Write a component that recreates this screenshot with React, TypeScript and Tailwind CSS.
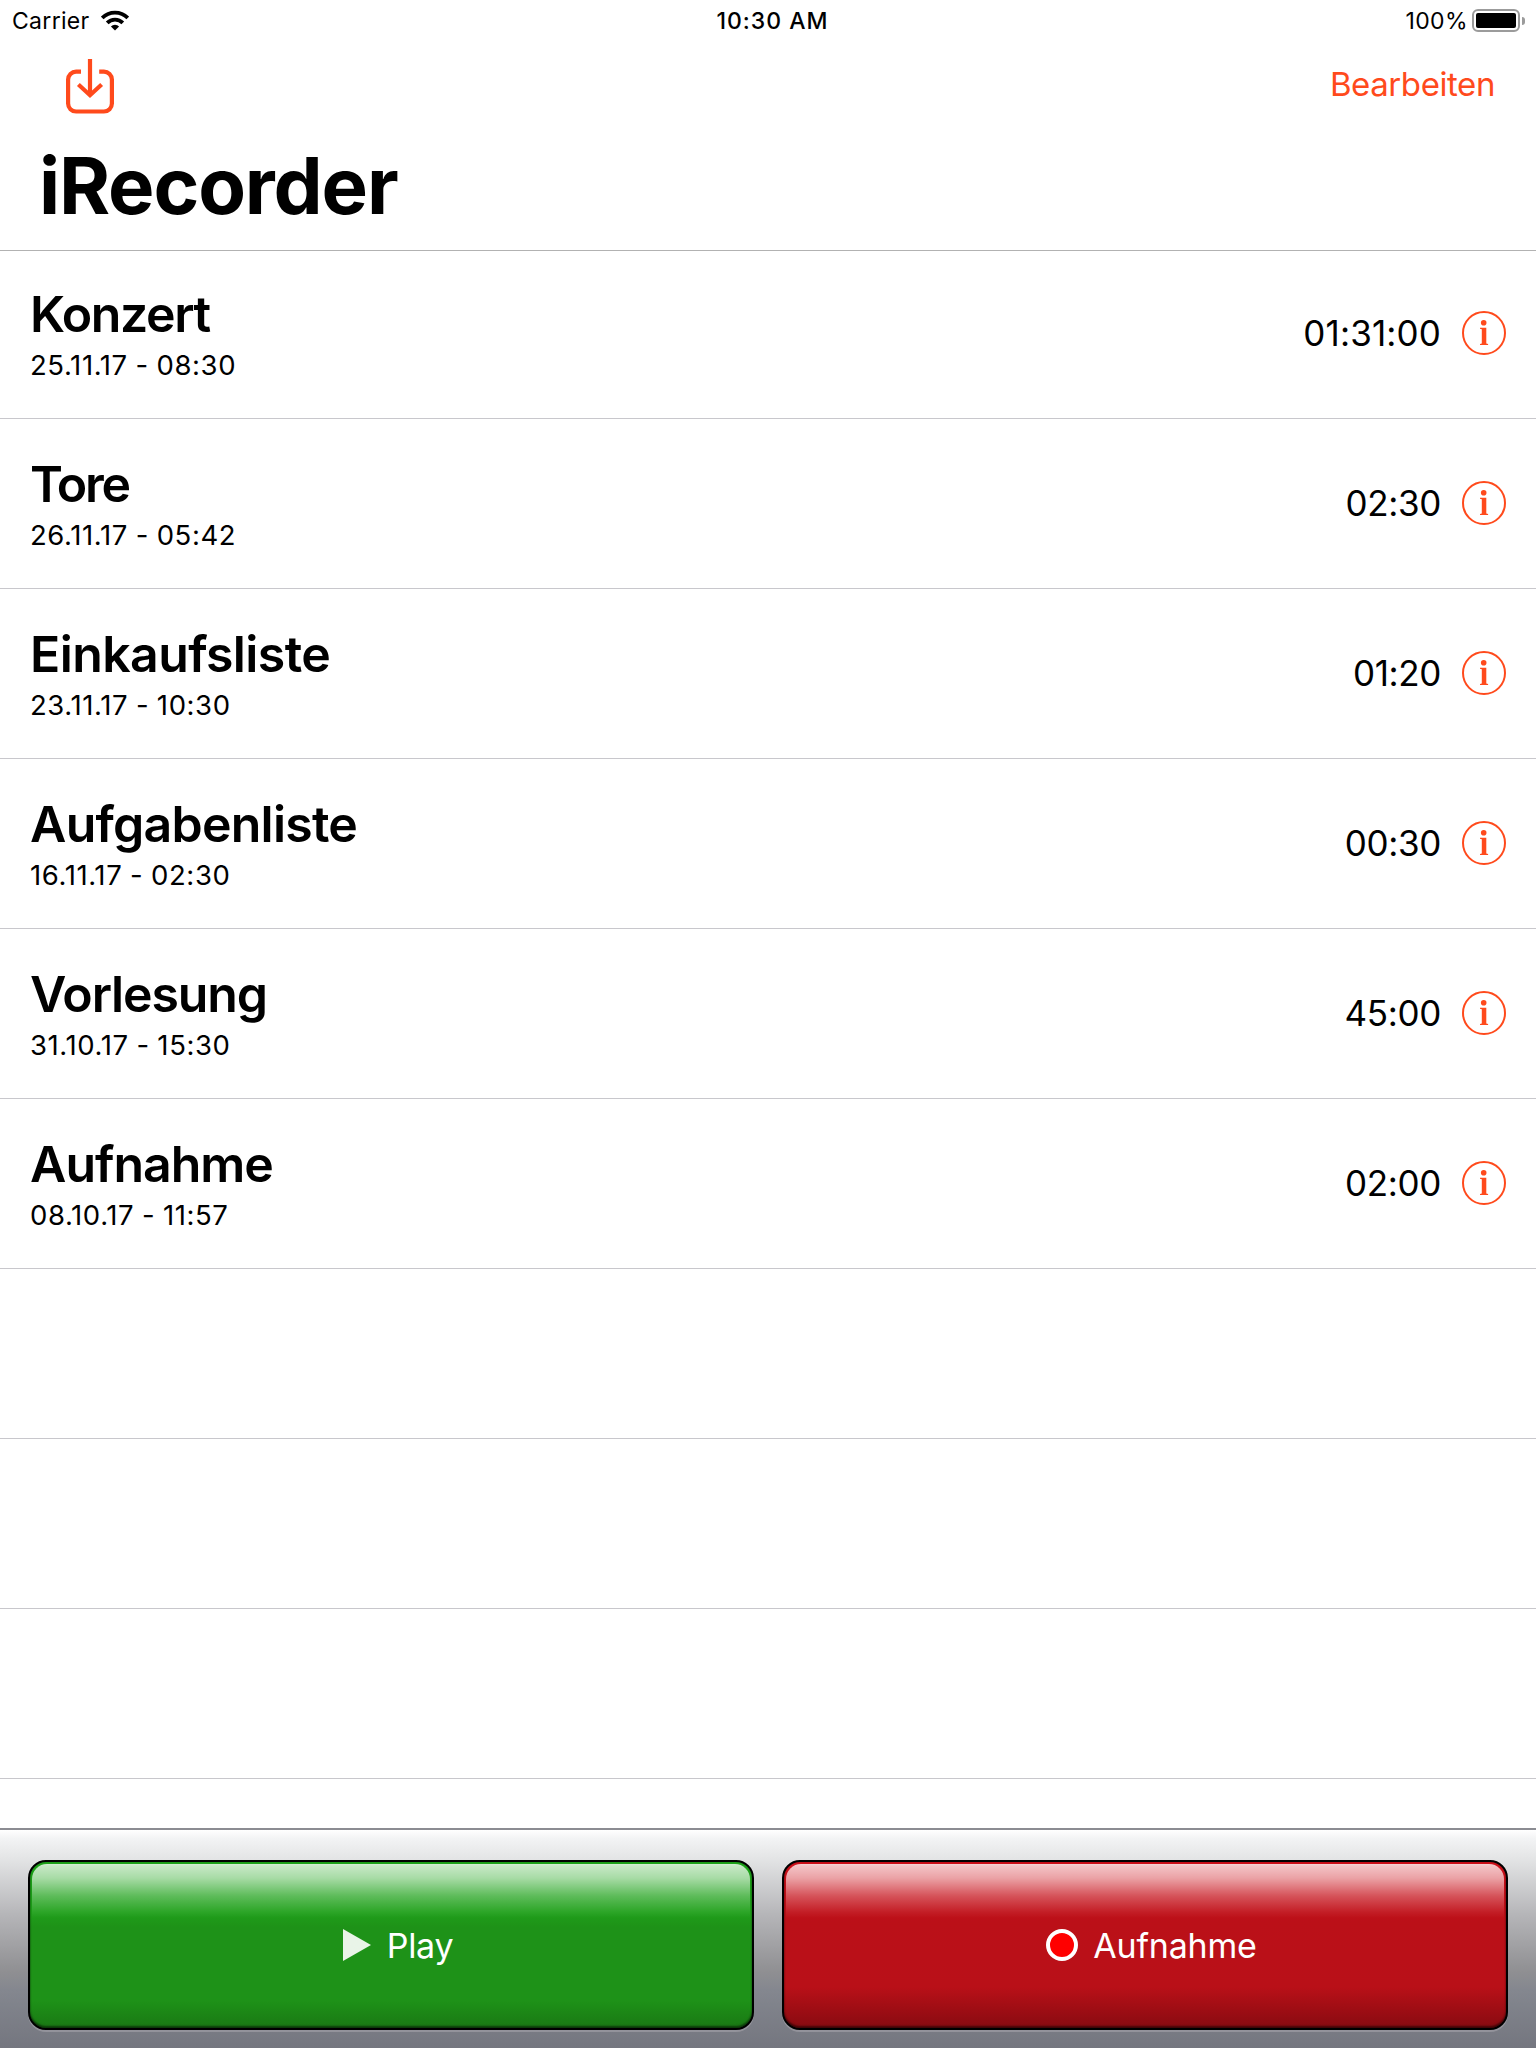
interface Recording {
  name: string
  date: string
  duration: string
  tracking: string
}

const recordings: Recording[] = [
  { name: "Konzert", date: "25.11.17 - 08:30", duration: "01:31:00", tracking: "tracking-[-1.4px]" },
  { name: "Tore", date: "26.11.17 - 05:42", duration: "02:30", tracking: "tracking-[-2.3px]" },
  { name: "Einkaufsliste", date: "23.11.17 - 10:30", duration: "01:20", tracking: "tracking-[-0.6px]" },
  { name: "Aufgabenliste", date: "16.11.17 - 02:30", duration: "00:30", tracking: "tracking-[-0.75px]" },
  { name: "Vorlesung", date: "31.10.17 - 15:30", duration: "45:00", tracking: "tracking-[-1.15px]" },
  { name: "Aufnahme", date: "08.10.17 - 11:57", duration: "02:00", tracking: "tracking-[-1px]" },
]

function WifiIcon() {
  return (
    <svg width="28" height="21" viewBox="101 9.5 28 21" fill="none" stroke="#000" strokeWidth="3.8">
      <path d="M102.2 17.4a18 18 0 0 1 25.6 0" />
      <path d="M107.2 22.3a11 11 0 0 1 15.6 0" />
      <path d="M110.9 25.9a5.8 5.8 0 0 1 8.2 0L115 30z" fill="#000" stroke="none" />
    </svg>
  )
}

function BatteryIcon() {
  return (
    <div className="flex items-center gap-0.5">
      <div className="h-[23px] w-12 rounded-[6px] border-2 border-[#9b9b9b] p-0.5">
        <div className="h-full w-full rounded-[2px] bg-black" />
      </div>
      <div className="h-2 w-[3px] rounded-r-full bg-[#9b9b9b]" />
    </div>
  )
}

function ImportIcon() {
  return (
    <svg width="48" height="55" viewBox="66 59 48 55" fill="none" stroke="#ff4a1c" strokeWidth="4.2">
      <path d="M81 71.6h-4.9a8 8 0 0 0-8 8v23.9a8 8 0 0 0 8 8h27.8a8 8 0 0 0 8-8V79.6a8 8 0 0 0-8-8h-4.7" />
      <path d="M90 59v36.5" />
      <path d="M78.4 84.5 90 95.2l11.6-10.7" />
    </svg>
  )
}

function InfoIcon() {
  return (
    <svg className="mb-px" width="44" height="44" viewBox="0 0 44 44" fill="#ff4a1c">
      <circle cx="22" cy="22" r="21" fill="none" stroke="#ff4a1c" strokeWidth="2" />
      <circle cx="21.7" cy="11.7" r="2.8" />
      <path d="M18 16.8h6.3v15.8l1.8.5V34H18v-.9l1.8-.5V18.3l-1.8-.5z" />
    </svg>
  )
}

// glossy highlight on the upper third of a button
function Gloss() {
  return (
    <span className="absolute inset-x-0.5 top-0.5 h-[54px] rounded-t-[15px] bg-[linear-gradient(to_bottom,rgba(255,255,255,0.82)_0px,rgba(255,255,255,0.75)_2px,rgba(255,255,255,0.61)_14px,rgba(255,255,255,0.28)_32px,rgba(255,255,255,0.06)_48px,rgba(255,255,255,0)_54px)]" />
  )
}

export default function App() {
  return (
    <div className="flex h-[2048px] w-[1536px] flex-col overflow-hidden bg-white font-['Inter',sans-serif] text-black">
      <header className="shrink-0 border-b border-[#b2b2b2]">
        <div className="grid h-[41px] grid-cols-3 items-center pl-3 pr-[11px] text-[23px]">
          <div className="flex items-center gap-[11px]">
            <span className="pt-0.5 tracking-[0.3px]">Carrier</span>
            <WifiIcon />
          </div>
          <span className="pl-[8px] pt-0.5 text-center font-medium tracking-[1px]">10:30 AM</span>
          <div className="flex items-center justify-end gap-1">
            <span className="pt-0.5 tracking-[0.4px]">100%</span>
            <BatteryIcon />
          </div>
        </div>

        <div className="flex h-[86px] items-center justify-between pl-[66px] pr-[41px]">
          <button className="mt-[5px]">
            <ImportIcon />
          </button>
          <button className="pt-0.5 text-[33px] tracking-[-0.42px] text-[#ff4a1c]">Bearbeiten</button>
        </div>

        <div className="flex h-[123px] items-center pb-1.5 pl-[39px]">
          <h1 className="text-[78px] font-bold tracking-[-1.15px]">iRecorder</h1>
        </div>
      </header>

      <main className="-mt-0.5 min-h-0 flex-1 overflow-hidden">
        {recordings.map((r) => (
          <div key={r.name} className="flex h-[170px] items-center justify-between border-b border-[#c8c7cc] px-[30px]">
            <div className="h-full pt-[35px]">
              <h2 className={`text-[50px] leading-[60px] font-semibold ${r.tracking}`}>{r.name}</h2>
              <p className="mt-[5px] text-[27.5px] leading-8 tracking-[0.6px] [word-spacing:-0.6px]">{r.date}</p>
            </div>
            <div className="flex items-center gap-[21px]">
              <span className={`text-[35px] ${r.duration.length > 5 ? "tracking-[0.15px]" : "tracking-[-0.35px]"}`}>
                {r.duration}
              </span>
              <InfoIcon />
            </div>
          </div>
        ))}
        {[0, 1, 2].map((i) => (
          <div key={i} className="h-[170px] border-b border-[#c8c7cc]" />
        ))}
      </main>

      <footer className="flex h-[220px] shrink-0 justify-between border-t-2 border-[#8b8c92] bg-[linear-gradient(to_bottom,#ffffff_0px,#f3f4f5_8px,#e4e5e6_28px,#b5b5b8_85px,#8f8f92_142px,#84878f_160px,#74767f_218px)] px-7 pt-[30px]">
        <button className="relative flex h-[170px] w-[726px] items-center justify-center gap-4 rounded-[18px] border-2 border-black bg-[linear-gradient(to_bottom,#1ea51a_0px,#1fa01a_50px,#1e9218_65px,#1e9218_138px,#1a7a14_164px)] pl-[14px] text-[34px] tracking-[-0.3px] text-white shadow-[0_2px_0_#93939b,inset_0_-2px_2px_rgba(0,0,0,0.5),inset_0_0_2px_rgba(0,0,0,0.25)]">
          <Gloss />
          <svg width="28" height="32" viewBox="0 0 28 32" fill="#e9f4e8">
            <path d="M0 0l28 16L0 32z" />
          </svg>
          Play
        </button>
        <button className="relative flex h-[170px] w-[726px] items-center justify-center gap-[15px] rounded-[18px] border-2 border-black bg-[linear-gradient(to_bottom,#d0101a_0px,#c01019_50px,#bb1018_60px,#b91018_125px,#8a0b11_164px)] pl-[13px] text-[34px] tracking-[-0.22px] text-white shadow-[0_2px_0_#93939b,inset_0_-2px_2px_rgba(0,0,0,0.5),inset_0_0_2px_rgba(0,0,0,0.25)]">
          <Gloss />
          <span className="h-8 w-8 rounded-full border-4 border-white bg-[#ff0000]" />
          Aufnahme
        </button>
      </footer>
    </div>
  )
}
